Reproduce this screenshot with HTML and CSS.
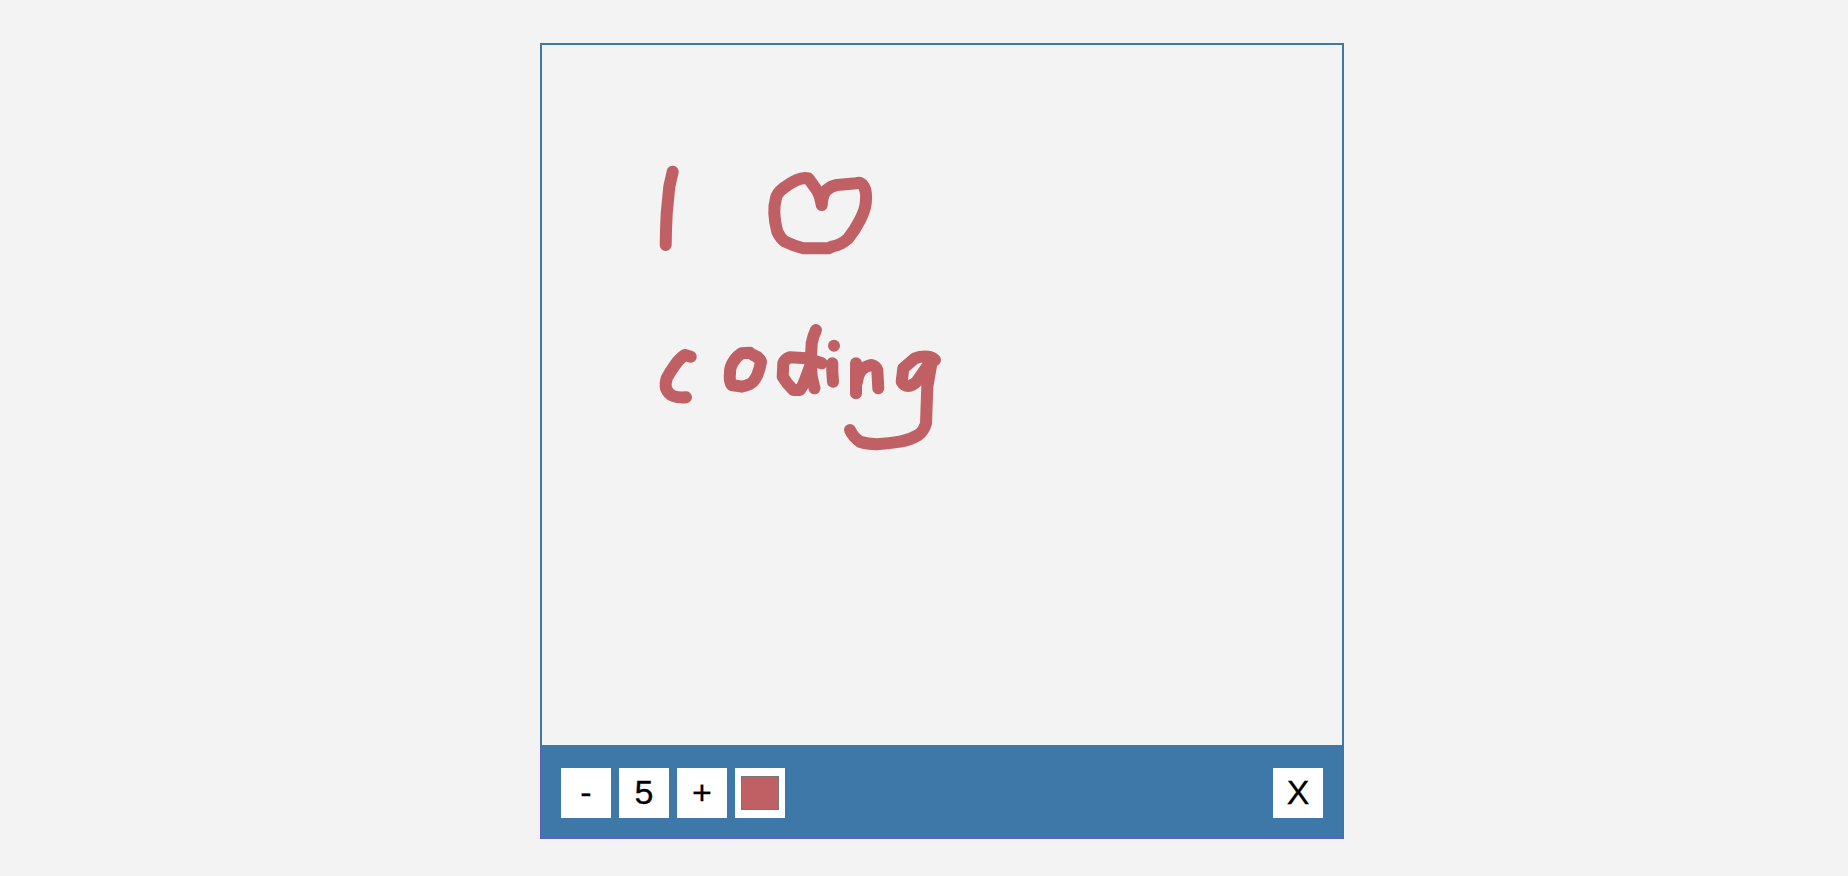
FILE: index.html
```html
<!DOCTYPE html>
<html lang="en">
<head>
    <meta charset="UTF-8">
    <title>Drawing board</title>
    <link rel="stylesheet" href="styles.css">
</head>
<body>
    <div class="board">
        <div class="canvas">
            <!-- viewBox uses page coordinates of the canvas area -->
            <svg class="drawing" viewBox="542 45 800 700" width="800" height="700">
                <g class="ink">
                    <!-- I -->
                    <polyline points="672.7,171.7 669.3,186.7 666.7,213.3 666,230 665.7,245"/>
                    <!-- heart -->
                    <path d="M821.7,205 Q820,195 816.7,190 T808.3,178.3 Q803,177 796.7,180 Q790,183 783.3,188.3 T776,198.3 Q774,205 774.3,213.3 T777.3,231.7 Q780,238 785,241.7 Q794,246 803.3,248.3 L828.3,248.3 L831.7,246.7 Q841,245 848.3,238.3 Q855,230 860,220 T865.7,203.3 Q867,192 864,186.7 T856.7,183.3 L836.7,185 Q831,186 826.7,190 T821.7,205"/>
                    <!-- c -->
                    <path d="M690.7,356.7 L685,355 Q680,358 675,365 T666.7,378.3 Q665,384 666,388.3 Q668,394 673.3,396 T686,397.3"/>
                    <!-- o -->
                    <path d="M750,352.7 L741.7,353.3 Q737,356 733.3,361.7 T730,373.3 Q729,381 731.7,385 L741.7,386.7 Q746,386 750,384 T757.3,375 Q760,368 761,361.7 Q759,357 753.3,355"/>
                    <!-- d -->
                    <path d="M821.7,363.3 L806.7,358.3 L790,357.3 Q785,359 783.3,363.3 L782.7,376.7 Q787,384 793.3,390 L800,390 Q803,386 805,380 L810,366.7"/>
                    <path d="M816,330 Q813,336 811.7,343.3 L810.7,361.7 L811.7,376.7 L814.5,388.3"/>
                    <!-- i -->
                    <polyline points="834,345.7 834,345.8"/>
                    <polyline points="832.3,363.3 832.3,372 833,381.7"/>
                    <!-- n -->
                    <polyline points="856,363.3 856,393.3"/>
                    <path d="M857,382 Q858,374 861.7,370 T871.7,365 Q876,366 877.3,370 L878.3,388.3"/>
                    <!-- g -->
                    <path d="M935,360 Q932,357 928.3,356.7 Q921,356 915,358.3 L903.3,368.3 L901.7,381.7 Q904,386 908.3,386 T916.7,381.7 L928.3,365"/>
                    <path d="M931.7,361.7 L927.3,386.7 L926,423.3 Q924,431 918.3,435 Q910,440 900,441.7 T876.7,444.3 Q867,444 860,441.7 Q853,437 850,430"/>
                </g>
            </svg>
        </div>
        <div class="toolbar">
            <button class="tool">-</button>
            <button class="tool">5</button>
            <button class="tool">+</button>
            <input class="color" type="color" value="#c06065">
            <button class="tool close">X</button>
        </div>
    </div>
</body>
</html>
```

FILE: styles.css
```css
body {
    margin: 0;
    padding: 43px 0 0 540px;
    background-color: #f3f3f3;
    font-family: "Liberation Sans", Arial, sans-serif;
}

.board {
    width: 804px;
}

.canvas {
    height: 700px;
    border: 2px solid #3d78a9;
}

.drawing {
    display: block;
}

.ink polyline,
.ink path {
    fill: none;
    stroke: #c06065;
    stroke-width: 12;
    stroke-linecap: round;
    stroke-linejoin: round;
}

.toolbar {
    display: flex;
    gap: 8px;
    padding: 20px;
    background-color: #3d78a9;
    border: 1px solid #5f5fc0;
}

.tool {
    width: 50px;
    height: 50px;
    padding: 0 0 2px;
    border: none;
    background-color: #fff;
    color: #000;
    font-family: inherit;
    font-size: 34px;
    -webkit-text-stroke: 0.3px #000;
}

.close {
    margin-left: auto;
}

.color {
    box-sizing: border-box;
    width: 50px;
    height: 50px;
    padding: 8px 6px;
    border: none;
    background-color: #fff;
}

.color::-webkit-color-swatch-wrapper {
    padding: 0;
}

.color::-webkit-color-swatch {
    border: 1px solid #777;
}
```
